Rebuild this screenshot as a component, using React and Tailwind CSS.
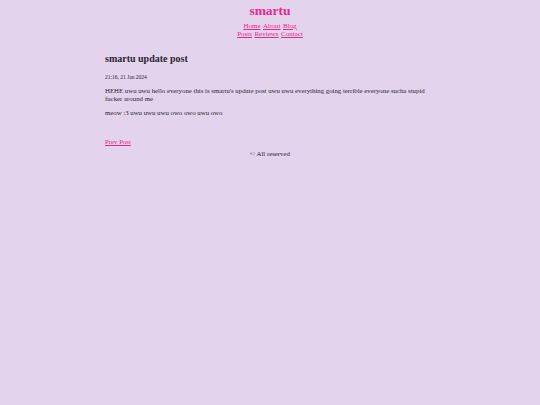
export default function App() {
  return (
    <div className="min-h-[405px] bg-[#e3d3ec] font-['Liberation_Serif',serif] text-[#2b2533]">
      <header className="flex flex-col items-center pt-[2px]">
        <h1 className="text-[13.5px] font-bold leading-[18px] text-[#e8288a]">smartu</h1>
        <nav className="mt-[2px] flex flex-col items-center text-[7px] leading-[8px] text-[#e8288a]">
          <div className="flex gap-[2.5px]">
            <a href="#" className="underline">Home</a>
            <a href="#" className="underline">About</a>
            <a href="#" className="underline">Blog</a>
          </div>
          <div className="flex gap-[2.5px]">
            <a href="#" className="underline">Posts</a>
            <a href="#" className="underline">Reviews</a>
            <a href="#" className="underline">Contact</a>
          </div>
        </nav>
      </header>

      <main className="mx-auto mt-[14px] w-[330px]">
        <h2 className="text-[10px] font-bold leading-[14px]">smartu update post</h2>
        <p className="mt-[8px] text-[5.5px] leading-[7px]">21:16, 21 Jan 2024</p>
        <p className="mt-[6px] text-[6.8px] leading-[8px]">
          HEHE uwu uwu hello everyone this is smartu's update post uwu uwu everything going terrible everyone sucha stupid fucker around me
        </p>
        <p className="mt-[6px] text-[6.8px] leading-[8px]">meow :3 uwu uwu uwu owo owo uwu owo</p>

        <a href="#" className="mt-[21px] block w-fit text-[6.8px] leading-[8px] text-[#e8288a] underline">Prev Post</a>
      </main>

      <footer className="mt-[4px] text-center text-[6.8px] leading-[8px]">© All reserved</footer>
    </div>
  );
}
